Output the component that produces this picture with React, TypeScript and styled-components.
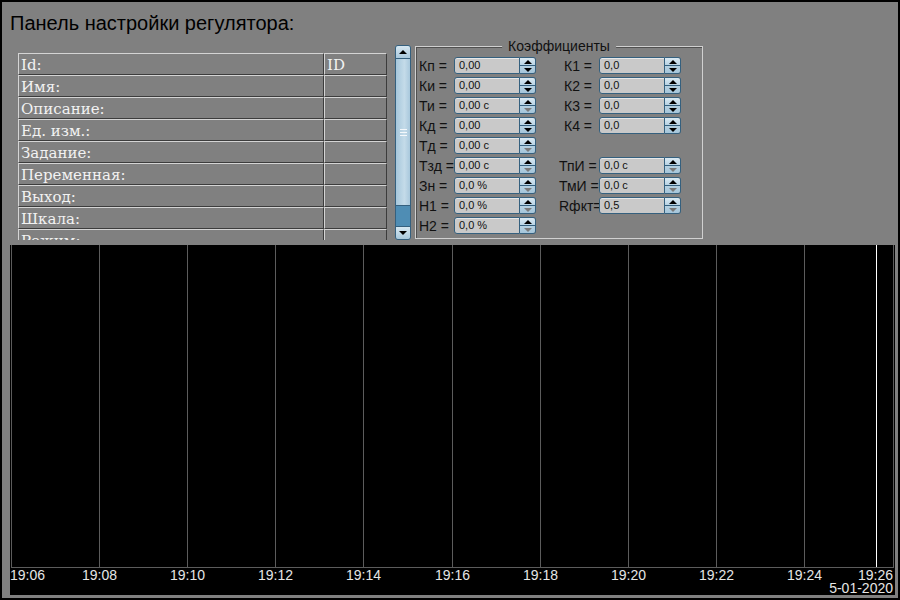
import * as React from "react";
import styled, { createGlobalStyle } from "styled-components";

const GlobalStyle = createGlobalStyle`
    html, body {
        margin: 0;
        padding: 0;
        background: #808080;
    }
`;

const Frame = styled.div`
    width: 900px;
    height: 600px;
    box-sizing: border-box;
    border: 2px solid #000;
    background: #808080;
    display: flex;
    flex-direction: column;
    overflow: hidden;
`;

const Title = styled.div`
    height: 40px;
    line-height: 42px;
    padding-left: 8px;
    font-family: "Liberation Sans", Arial, sans-serif;
    font-size: 20px;
    color: #000;
    white-space: nowrap;
`;

const TopSection = styled.div`
    display: flex;
    align-items: flex-start;
    padding-top: 3px;
    height: 198px;
    box-sizing: border-box;
`;

const TableViewport = styled.div`
    margin-top: 8px;
    margin-left: 16px;
    width: 369px;
    height: 187px;
    overflow: hidden;
`;

const PropTable = styled.table`
    width: 369px;
    border-collapse: separate;
    border-spacing: 0;
    font-family: "DejaVu Serif", serif;
    font-size: 15px;
    color: #f2f2f2;
`;

const Cell = styled.td<{ $w: number }>`
    width: ${(p) => p.$w}px;
    box-sizing: border-box;
    height: 22px;
    padding: 1px 2px 0;
    border: 1px solid;
    border-color: #d4d4d4 #3c3c3c #3c3c3c #d4d4d4;
    white-space: nowrap;
    overflow: hidden;
    line-height: 18px;
`;

const ScrollBar = styled.div`
    margin-left: 8px;
    width: 16px;
    height: 195px;
    box-sizing: border-box;
    border: 1px solid #35607e;
    border-radius: 3px;
    display: flex;
    flex-direction: column;
    overflow: hidden;
    background: #4f8db4;
`;

const ScrollButton = styled.div<{ $down?: boolean }>`
    height: 12px;
    flex: none;
    background: linear-gradient(#d6e7f1, #a9c9dd);
    border-${(p) => (p.$down ? "top" : "bottom")}: 1px solid #35607e;
    display: flex;
    align-items: center;
    justify-content: center;
    order: ${(p) => (p.$down ? 3 : 0)};
`;

const Thumb = styled.div`
    height: 146px;
    flex: none;
    order: 1;
    background: linear-gradient(90deg, #a6c7db, #c4dbe9 60%, #a9c8dc);
    border-bottom: 1px solid #35607e;
    display: flex;
    align-items: center;
    justify-content: center;
`;

const Grip = styled.div`
    width: 7px;
    height: 5px;
    border-top: 1px solid #f4f8fb;
    border-bottom: 1px solid #f4f8fb;
    position: relative;
    &::after {
        content: "";
        position: absolute;
        left: 0;
        right: 0;
        top: 2px;
        border-top: 1px solid #f4f8fb;
    }
`;

const Track = styled.div`
    flex: 1;
    order: 2;
`;

const Arrow = styled.div<{ $down?: boolean; $dim?: boolean }>`
    width: 0;
    height: 0;
    border-left: 4px solid transparent;
    border-right: 4px solid transparent;
    ${(p) =>
        p.$down
            ? `border-top: 4px solid ${p.$dim ? "#7a7a7a" : "#000"};`
            : `border-bottom: 4px solid ${p.$dim ? "#7a7a7a" : "#000"};`}
`;

const GroupBox = styled.div`
    position: relative;
    margin-top: 1px;
    margin-left: 4px;
    width: 288px;
    height: 193px;
    box-sizing: border-box;
    border: 1px solid #d0d0d0;
    box-shadow: inset 1px 1px 0 #505050;
    padding: 10px 0 0 3px;
`;

const GroupCaption = styled.div`
    position: absolute;
    top: -9px;
    left: 50%;
    transform: translateX(-50%);
    padding: 0 6px;
    background: #808080;
    font-family: "Liberation Sans", Arial, sans-serif;
    font-size: 14px;
    line-height: 16px;
    color: #111;
    white-space: nowrap;
`;

const CoefGrid = styled.div`
    display: grid;
    grid-template-columns: 117px 117px;
    column-gap: 28px;
    row-gap: 3px;
    grid-auto-rows: 17px;
`;

const CoefRow = styled.div`
    display: flex;
    align-items: center;
`;

const CoefLabel = styled.span<{ $wide?: boolean }>`
    width: ${(p) => (p.$wide ? 40 : 35)}px;
    margin-left: ${(p) => (p.$wide ? -5 : 0)}px;
    flex: none;
    font-family: "Liberation Sans", Arial, sans-serif;
    font-size: 14px;
    color: #111;
    white-space: nowrap;
    overflow: visible;
`;

const Spin = styled.div`
    display: flex;
    width: 82px;
    height: 17px;
    flex: none;
`;

const SpinField = styled.div`
    flex: 1;
    box-sizing: border-box;
    background: #c9c9c9;
    border: 1px solid #35607e;
    border-radius: 3px 0 0 3px;
    box-shadow: inset 0 1px 0 #e8e8e8;
    padding-left: 4px;
    font-family: "Liberation Sans", Arial, sans-serif;
    font-size: 11px;
    line-height: 15px;
    color: #101010;
    white-space: nowrap;
    overflow: hidden;
`;

const SpinButtons = styled.div`
    width: 16px;
    box-sizing: border-box;
    border: 1px solid #35607e;
    border-left: none;
    border-radius: 0 3px 3px 0;
    display: flex;
    flex-direction: column;
    overflow: hidden;
`;

const SpinHalf = styled.div<{ $down?: boolean }>`
    flex: 1;
    background: ${(p) =>
        p.$down ? "linear-gradient(#b6d1e2, #a4c5da)" : "linear-gradient(#dbeaf3, #b9d4e5)"};
    ${(p) => (p.$down ? "" : "border-bottom: 1px solid #35607e;")}
    display: flex;
    align-items: center;
    justify-content: center;
`;

const Chart = styled.div`
    margin-top: 5px;
    margin-left: 8px;
    width: 885px;
    height: 350px;
    background: #000;
    flex: none;
`;

type Coef = { label: string; value: string; dim?: boolean; wide?: boolean } | null;

const rows: Coef[] = [
    { label: "Кп =", value: "0,00" },
    { label: "К1 =", value: "0,0" },
    { label: "Ки =", value: "0,00" },
    { label: "К2 =", value: "0,0" },
    { label: "Ти =", value: "0,00 с", dim: true },
    { label: "К3 =", value: "0,0" },
    { label: "Кд =", value: "0,00" },
    { label: "К4 =", value: "0,0" },
    { label: "Тд =", value: "0,00 с", dim: true },
    null,
    { label: "Тзд =", value: "0,00 с", dim: true },
    { label: "ТпИ =", value: "0,0 с", dim: true, wide: true },
    { label: "Зн =", value: "0,0 %", dim: true },
    { label: "ТмИ =", value: "0,0 с", dim: true, wide: true },
    { label: "Н1 =", value: "0,0 %", dim: true },
    { label: "Rфкт=", value: "0,5", dim: true, wide: true },
    { label: "Н2 =", value: "0,0 %", dim: true },
    null,
];

const props = [
    ["Id:", "ID"],
    ["Имя:", ""],
    ["Описание:", ""],
    ["Ед. изм.:", ""],
    ["Задание:", ""],
    ["Переменная:", ""],
    ["Выход:", ""],
    ["Шкала:", ""],
    ["Режим:", ""],
    ["Статус:", ""],
];

const gridX = [89, 177, 265, 353, 442, 530, 618, 706, 794];
const labels = ["19:08", "19:10", "19:12", "19:14", "19:16", "19:18", "19:20", "19:22", "19:24"];

const TrendChart = () => (
    <Chart>
        <svg width="885" height="350" viewBox="0 0 885 350">
            {gridX.map((x) => (
                <line key={x} x1={x + 0.5} y1={0} x2={x + 0.5} y2={322} stroke="#5c5c5c" />
            ))}
            <line x1={866.5} y1={0} x2={866.5} y2={322} stroke="#ffffff" />
            <line x1={1.5} y1={0} x2={1.5} y2={322} stroke="#5c5c5c" />
            <line x1={883.5} y1={0} x2={883.5} y2={322} stroke="#5c5c5c" />
            <line x1={1} y1={322.5} x2={884} y2={322.5} stroke="#5c5c5c" />
            <g fontFamily="Liberation Sans, Arial, sans-serif" fontSize="14" fill="#e6e6e6">
                <text x={0} y={335}>
                    19:06
                </text>
                {gridX.map((x, i) => (
                    <text key={x} x={x + 0.5} y={335} textAnchor="middle">
                        {labels[i]}
                    </text>
                ))}
                <text x={883} y={335} textAnchor="end">
                    19:26
                </text>
                <text x={883} y={348} textAnchor="end">
                    5-01-2020
                </text>
            </g>
        </svg>
    </Chart>
);

const SpinBox = ({ value, dim }: { value: string; dim?: boolean }) => (
    <Spin>
        <SpinField>{value}</SpinField>
        <SpinButtons>
            <SpinHalf>
                <Arrow />
            </SpinHalf>
            <SpinHalf $down>
                <Arrow $down $dim={dim} />
            </SpinHalf>
        </SpinButtons>
    </Spin>
);

export default function App() {
    return (
        <>
            <GlobalStyle />
            <Frame>
                <Title>Панель настройки регулятора:</Title>
                <TopSection>
                    <TableViewport>
                        <PropTable>
                            <tbody>
                                {props.map(([name, val]) => (
                                    <tr key={name}>
                                        <Cell $w={306}>{name}</Cell>
                                        <Cell $w={63}>{val}</Cell>
                                    </tr>
                                ))}
                            </tbody>
                        </PropTable>
                    </TableViewport>
                    <ScrollBar>
                        <ScrollButton>
                            <Arrow />
                        </ScrollButton>
                        <Thumb>
                            <Grip />
                        </Thumb>
                        <Track />
                        <ScrollButton $down>
                            <Arrow $down />
                        </ScrollButton>
                    </ScrollBar>
                    <GroupBox>
                        <GroupCaption>Коэффициенты</GroupCaption>
                        <CoefGrid>
                            {rows.map((r, i) =>
                                r ? (
                                    <CoefRow key={i}>
                                        <CoefLabel $wide={r.wide}>{r.label}</CoefLabel>
                                        <SpinBox value={r.value} dim={r.dim} />
                                    </CoefRow>
                                ) : (
                                    <CoefRow key={i} />
                                )
                            )}
                        </CoefGrid>
                    </GroupBox>
                </TopSection>
                <TrendChart />
            </Frame>
        </>
    );
}
